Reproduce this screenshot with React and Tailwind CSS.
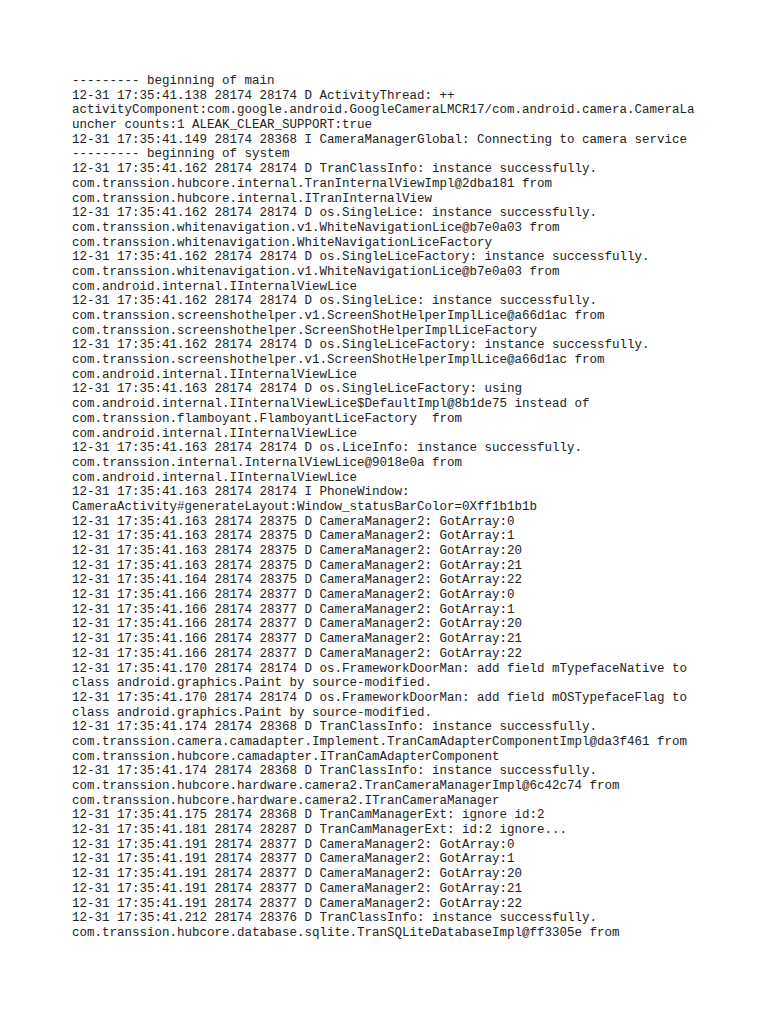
import React from 'react';

const LOG = `--------- beginning of main
12-31 17:35:41.138 28174 28174 D ActivityThread: ++
activityComponent:com.google.android.GoogleCameraLMCR17/com.android.camera.CameraLa
uncher counts:1 ALEAK_CLEAR_SUPPORT:true
12-31 17:35:41.149 28174 28368 I CameraManagerGlobal: Connecting to camera service
--------- beginning of system
12-31 17:35:41.162 28174 28174 D TranClassInfo: instance successfully.
com.transsion.hubcore.internal.TranInternalViewImpl@2dba181 from
com.transsion.hubcore.internal.ITranInternalView
12-31 17:35:41.162 28174 28174 D os.SingleLice: instance successfully.
com.transsion.whitenavigation.v1.WhiteNavigationLice@b7e0a03 from
com.transsion.whitenavigation.WhiteNavigationLiceFactory
12-31 17:35:41.162 28174 28174 D os.SingleLiceFactory: instance successfully.
com.transsion.whitenavigation.v1.WhiteNavigationLice@b7e0a03 from
com.android.internal.IInternalViewLice
12-31 17:35:41.162 28174 28174 D os.SingleLice: instance successfully.
com.transsion.screenshothelper.v1.ScreenShotHelperImplLice@a66d1ac from
com.transsion.screenshothelper.ScreenShotHelperImplLiceFactory
12-31 17:35:41.162 28174 28174 D os.SingleLiceFactory: instance successfully.
com.transsion.screenshothelper.v1.ScreenShotHelperImplLice@a66d1ac from
com.android.internal.IInternalViewLice
12-31 17:35:41.163 28174 28174 D os.SingleLiceFactory: using
com.android.internal.IInternalViewLice$DefaultImpl@8b1de75 instead of
com.transsion.flamboyant.FlamboyantLiceFactory  from
com.android.internal.IInternalViewLice
12-31 17:35:41.163 28174 28174 D os.LiceInfo: instance successfully.
com.transsion.internal.InternalViewLice@9018e0a from
com.android.internal.IInternalViewLice
12-31 17:35:41.163 28174 28174 I PhoneWindow:
CameraActivity#generateLayout:Window_statusBarColor=0Xff1b1b1b
12-31 17:35:41.163 28174 28375 D CameraManager2: GotArray:0
12-31 17:35:41.163 28174 28375 D CameraManager2: GotArray:1
12-31 17:35:41.163 28174 28375 D CameraManager2: GotArray:20
12-31 17:35:41.163 28174 28375 D CameraManager2: GotArray:21
12-31 17:35:41.164 28174 28375 D CameraManager2: GotArray:22
12-31 17:35:41.166 28174 28377 D CameraManager2: GotArray:0
12-31 17:35:41.166 28174 28377 D CameraManager2: GotArray:1
12-31 17:35:41.166 28174 28377 D CameraManager2: GotArray:20
12-31 17:35:41.166 28174 28377 D CameraManager2: GotArray:21
12-31 17:35:41.166 28174 28377 D CameraManager2: GotArray:22
12-31 17:35:41.170 28174 28174 D os.FrameworkDoorMan: add field mTypefaceNative to
class android.graphics.Paint by source-modified.
12-31 17:35:41.170 28174 28174 D os.FrameworkDoorMan: add field mOSTypefaceFlag to
class android.graphics.Paint by source-modified.
12-31 17:35:41.174 28174 28368 D TranClassInfo: instance successfully.
com.transsion.camera.camadapter.Implement.TranCamAdapterComponentImpl@da3f461 from
com.transsion.hubcore.camadapter.ITranCamAdapterComponent
12-31 17:35:41.174 28174 28368 D TranClassInfo: instance successfully.
com.transsion.hubcore.hardware.camera2.TranCameraManagerImpl@6c42c74 from
com.transsion.hubcore.hardware.camera2.ITranCameraManager
12-31 17:35:41.175 28174 28368 D TranCamManagerExt: ignore id:2
12-31 17:35:41.181 28174 28287 D TranCamManagerExt: id:2 ignore...
12-31 17:35:41.191 28174 28377 D CameraManager2: GotArray:0
12-31 17:35:41.191 28174 28377 D CameraManager2: GotArray:1
12-31 17:35:41.191 28174 28377 D CameraManager2: GotArray:20
12-31 17:35:41.191 28174 28377 D CameraManager2: GotArray:21
12-31 17:35:41.191 28174 28377 D CameraManager2: GotArray:22
12-31 17:35:41.212 28174 28376 D TranClassInfo: instance successfully.
com.transsion.hubcore.database.sqlite.TranSQLiteDatabaseImpl@ff3305e from`;

const App = () => {
  return (
    <div className="w-[768px] h-[1024px] bg-white overflow-hidden">
      {/* Log page */}
      <pre className="pl-[72px] pt-[74px] m-0 whitespace-pre text-[12.5px] leading-[14.69px] text-[#222] font-['Liberation_Mono',monospace]">
        {LOG}
      </pre>
    </div>
  );
};

export default App;
